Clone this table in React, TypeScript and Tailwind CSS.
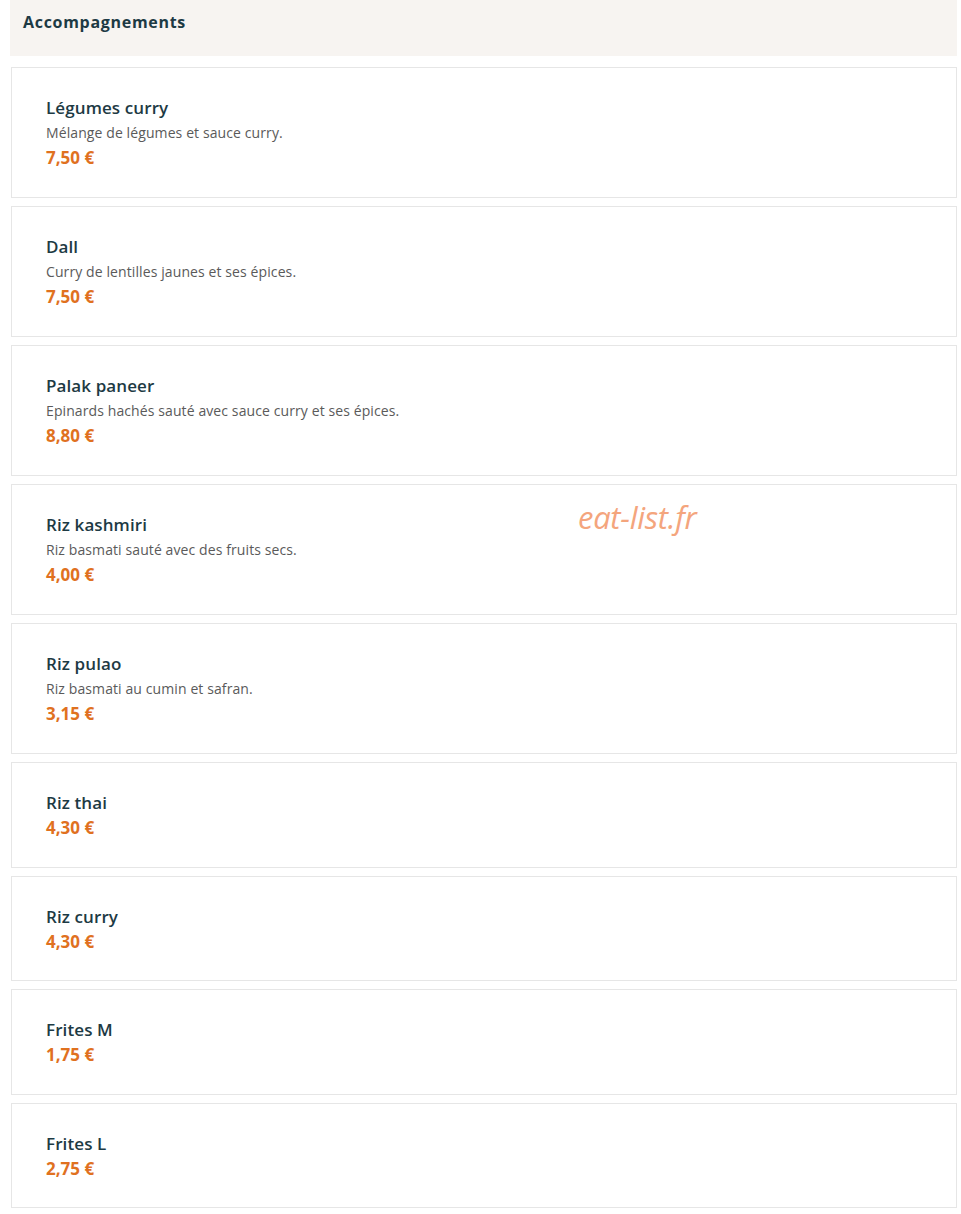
import React from "react";

const items: { name: string; desc?: string; price: string }[] = [
  { name: "Légumes curry", desc: "Mélange de légumes et sauce curry.", price: "7,50 €" },
  { name: "Dall", desc: "Curry de lentilles jaunes et ses épices.", price: "7,50 €" },
  { name: "Palak paneer", desc: "Epinards hachés sauté avec sauce curry et ses épices.", price: "8,80 €" },
  { name: "Riz kashmiri", desc: "Riz basmati sauté avec des fruits secs.", price: "4,00 €" },
  { name: "Riz pulao", desc: "Riz basmati au cumin et safran.", price: "3,15 €" },
  { name: "Riz thai", price: "4,30 €" },
  { name: "Riz curry", price: "4,30 €" },
  { name: "Frites M", price: "1,75 €" },
  { name: "Frites L", price: "2,75 €" },
];

export default function App() {
  return (
    <div className="relative w-[961px] min-h-[1214px] bg-white font-['Open_Sans',sans-serif]">
      <div className="pl-[10px] pr-[4px]">
        <div className="h-[56px] bg-[#f7f4f1] flex items-center pl-[13px] pb-[12px]">
          <span className="text-[16px] font-bold text-[#1d3a44] tracking-[0.7px]">Accompagnements</span>
        </div>
        <div className="flex flex-col gap-[8px] pt-[11px] pl-[1px]">
          {items.map((it) => (
            <div key={it.name} className="border border-[#e6e6e6] bg-white px-[34px] py-[28px] flex flex-col">
              <div className="h-[24px] leading-[24px] text-[17px] font-semibold text-[#1d3a44] tracking-[0.1px]">{it.name}</div>
              {it.desc && (
                <div className="h-[25px] leading-[25px] text-[14px] text-[#5a5a5a] tracking-[0.1px]">{it.desc}</div>
              )}
              <div className={`${it.desc ? "h-[24px] leading-[26px]" : "h-[23.5px] leading-[25px]"} text-[17px] font-bold text-[#e0711f]`}>{it.price}</div>
            </div>
          ))}
        </div>
      </div>
      <div className="absolute left-[578px] top-[494px] text-[31px] italic text-[#f4a57d] font-['Open_Sans',sans-serif] tracking-[-0.3px]">
        eat-list.fr
      </div>
    </div>
  );
}
